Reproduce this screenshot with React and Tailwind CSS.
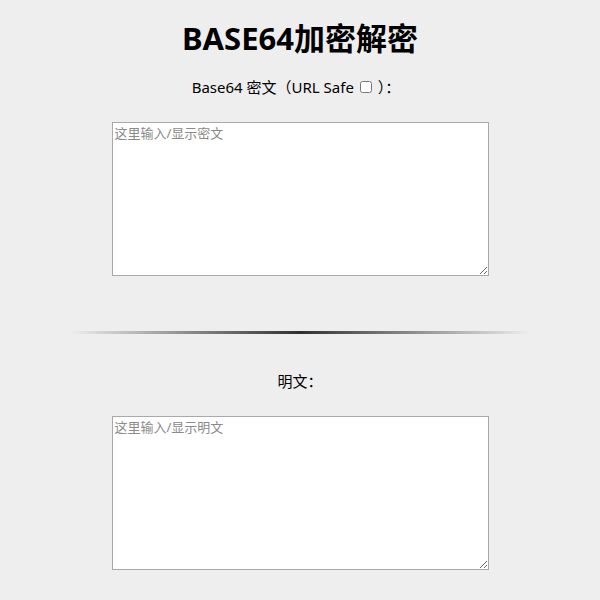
import { useState } from 'react';

export default function App() {
  const [cipher, setCipher] = useState('');
  const [plain, setPlain] = useState('');
  const [urlSafe, setUrlSafe] = useState(false);

  return (
    <main
      className="min-h-[600px] bg-[#eeeeee] text-black"
      style={{ fontFamily: '"Noto Sans", "Noto Sans CJK SC", sans-serif' }}
    >
      <div className="flex flex-col items-center pt-[18px]">
        <h1 className="text-[31px] font-bold leading-[40px]">BASE64加密解密</h1>

        <label className="mt-[18px] flex h-[22px] items-center pr-[8px] text-[15px] leading-[22px]">
          Base64 密文（URL Safe
          <input
            type="checkbox"
            checked={urlSafe}
            onChange={(e) => setUrlSafe(e.target.checked)}
            className="mx-[6px] h-[12px] w-[12px]"
          />
          ）：
        </label>

        <textarea
          className="mt-[24px] h-[154px] w-[377px] border border-[#a9a9a9] bg-white px-[2px] py-[1px] text-[13px] text-black outline-none placeholder:text-[#8a8a8a]"
          placeholder="这里输入/显示密文"
          value={cipher}
          onChange={(e) => setCipher(e.target.value)}
        />

        <div className="mt-[55px] h-[3px] w-[460px] bg-[linear-gradient(to_right,rgba(0,0,0,0),rgba(0,0,0,0.8),rgba(0,0,0,0))]" />

        <div className="mt-[36px] h-[22px] text-[15px] leading-[22px]">明文：</div>

        <textarea
          className="mt-[24px] h-[154px] w-[377px] border border-[#a9a9a9] bg-white px-[2px] py-[1px] text-[13px] text-black outline-none placeholder:text-[#8a8a8a]"
          placeholder="这里输入/显示明文"
          value={plain}
          onChange={(e) => setPlain(e.target.value)}
        />
      </div>
    </main>
  );
}
